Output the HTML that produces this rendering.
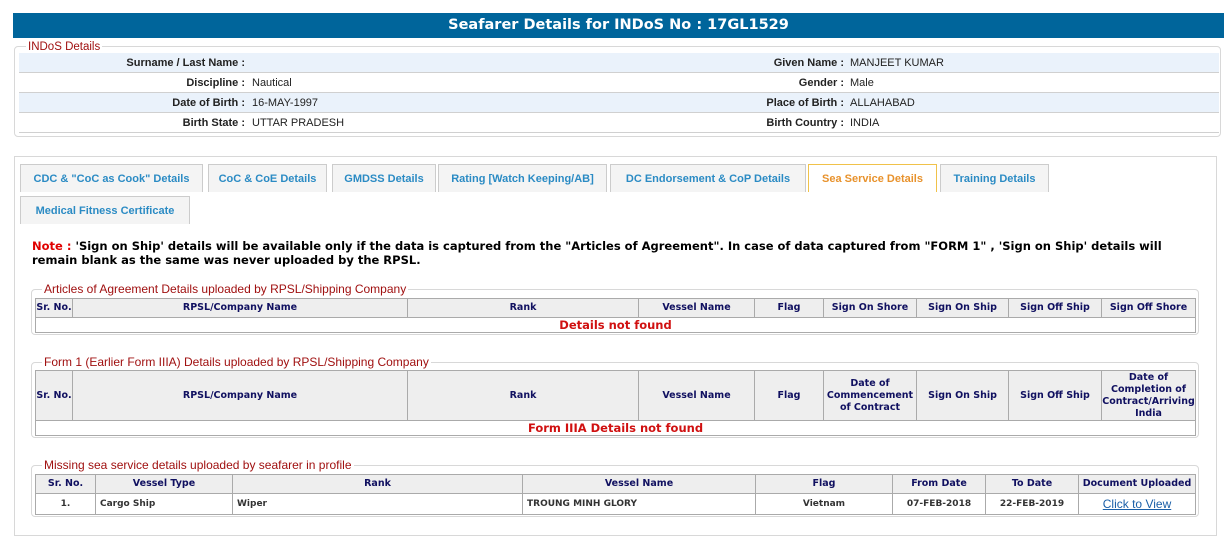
<!DOCTYPE html>
<html><head><meta charset="utf-8"><style>
*{box-sizing:border-box;margin:0;padding:0}
body{width:1226px;height:530px;background:#fff;position:relative;overflow:hidden;font-family:"Liberation Sans",Arial,sans-serif}
.abs{position:absolute}
.hdr{left:13px;top:13px;width:1211px;height:25px;background:#00659b;color:#fff;font:bold 14.5px "DejaVu Sans",Verdana,sans-serif;text-align:center;line-height:25px}
.fs{position:absolute;border:1px solid #d8d8d8;border-radius:4px}
.lg{position:absolute;background:#fff;color:#a01010;font-size:11px;padding:0 2px;line-height:12px}
.lg2{font-size:12px}
.row{position:absolute;left:19px;width:1200px;height:20px;border-bottom:1px solid #d0d0d0;font-size:11px;color:#222;line-height:20px}
.row.b{background:#eaf2fb}
.row span{position:absolute}
.l{font-weight:bold;text-align:right;width:240px}
.tab{position:absolute;height:28px;background:#f4f4f4;border:1px solid #ccc;border-bottom:none;color:#2b8bc4;font-size:11px;font-weight:bold;line-height:28px;text-align:center;white-space:nowrap}
.tab.act{background:#fff;border-color:#f0c24a;color:#e8922c}
.note{left:32px;top:239px;font:bold 11.5px "DejaVu Sans",Verdana,sans-serif;color:#000;line-height:14px;width:1170px}
table{position:absolute;border-collapse:collapse;table-layout:fixed;font-family:"DejaVu Sans",Verdana,sans-serif;border:1px solid #999}
th{background:#eee;color:#101060;font-size:9.5px;border:1px solid #aaa;font-weight:bold;line-height:12px}
td{border:1px solid #aaa;font-size:9px;color:#333;font-weight:bold}
.nf{color:#d01010;font-size:11.5px;text-align:center}
</style></head><body>
<div class="abs hdr">Seafarer Details for INDoS No : 17GL1529</div>

<div class="fs" style="left:14px;top:46px;width:1207px;height:91px"></div>
<div class="lg" style="left:26px;top:41px;font-size:11.5px">INDoS Details</div>
<div class="row b" style="top:53px"><span class="l" style="left:-14px">Surname / Last Name :</span><span class="l" style="left:585px">Given Name :</span><span style="left:831px">MANJEET KUMAR</span></div>
<div class="row" style="top:73px"><span class="l" style="left:-14px">Discipline :</span><span style="left:233px">Nautical</span><span class="l" style="left:585px">Gender :</span><span style="left:831px">Male</span></div>
<div class="row b" style="top:93px"><span class="l" style="left:-14px">Date of Birth :</span><span style="left:233px">16-MAY-1997</span><span class="l" style="left:585px">Place of Birth :</span><span style="left:831px">ALLAHABAD</span></div>
<div class="row" style="top:113px"><span class="l" style="left:-14px">Birth State :</span><span style="left:233px">UTTAR PRADESH</span><span class="l" style="left:585px">Birth Country :</span><span style="left:831px">INDIA</span></div>

<div class="fs" style="left:14px;top:156px;width:1203px;height:380px;border-radius:0"></div>
<div class="tab" style="left:20px;top:164px;width:183px">CDC &amp; "CoC as Cook" Details</div>
<div class="tab" style="left:208px;top:164px;width:119px">CoC &amp; CoE Details</div>
<div class="tab" style="left:332px;top:164px;width:104px">GMDSS Details</div>
<div class="tab" style="left:438px;top:164px;width:169px">Rating [Watch Keeping/AB]</div>
<div class="tab" style="left:610px;top:164px;width:196px">DC Endorsement &amp; CoP Details</div>
<div class="tab act" style="left:808px;top:164px;width:129px">Sea Service Details</div>
<div class="tab" style="left:940px;top:164px;width:109px">Training Details</div>
<div class="tab" style="left:20px;top:196px;width:170px">Medical Fitness Certificate</div>

<div class="abs note"><span style="color:#e00000">Note :</span> 'Sign on Ship' details will be available only if the data is captured from the "Articles of Agreement". In case of data captured from "FORM 1" , 'Sign on Ship' details will remain blank as the same was never uploaded by the RPSL.</div>

<div class="fs" style="left:31px;top:289px;width:1168px;height:46px"></div>
<div class="lg lg2" style="left:42px;top:283px">Articles of Agreement Details uploaded by RPSL/Shipping Company</div>
<table style="left:35px;top:298px;width:1161px">
<colgroup><col style="width:37px"><col style="width:335px"><col style="width:231px"><col style="width:116px"><col style="width:69px"><col style="width:93px"><col style="width:92px"><col style="width:93px"><col></colgroup>
<tr style="height:19px"><th>Sr. No.</th><th>RPSL/Company Name</th><th>Rank</th><th>Vessel Name</th><th>Flag</th><th>Sign On Shore</th><th>Sign On Ship</th><th>Sign Off Ship</th><th>Sign Off Shore</th></tr>
<tr style="height:15px"><td colspan="9" class="nf">Details not found</td></tr>
</table>

<div class="fs" style="left:31px;top:362px;width:1168px;height:76px"></div>
<div class="lg lg2" style="left:42px;top:356px">Form 1 (Earlier Form IIIA) Details uploaded by RPSL/Shipping Company</div>
<table style="left:35px;top:370px;width:1161px">
<colgroup><col style="width:37px"><col style="width:335px"><col style="width:231px"><col style="width:116px"><col style="width:69px"><col style="width:93px"><col style="width:92px"><col style="width:93px"><col></colgroup>
<tr style="height:50px"><th>Sr. No.</th><th>RPSL/Company Name</th><th>Rank</th><th>Vessel Name</th><th>Flag</th><th>Date of Commencement of Contract</th><th>Sign On Ship</th><th>Sign Off Ship</th><th>Date of Completion of Contract/Arriving India</th></tr>
<tr style="height:15px"><td colspan="9" class="nf">Form IIIA Details not found</td></tr>
</table>

<div class="fs" style="left:31px;top:465px;width:1168px;height:52px"></div>
<div class="lg lg2" style="left:42px;top:459px">Missing sea service details uploaded by seafarer in profile</div>
<table style="left:35px;top:474px;width:1161px">
<colgroup><col style="width:60px"><col style="width:137px"><col style="width:290px"><col style="width:233px"><col style="width:137px"><col style="width:93px"><col style="width:93px"><col></colgroup>
<tr style="height:19px"><th>Sr. No.</th><th>Vessel Type</th><th>Rank</th><th>Vessel Name</th><th>Flag</th><th>From Date</th><th>To Date</th><th>Document Uploaded</th></tr>
<tr style="height:21px"><td style="text-align:center">1.</td><td style="padding-left:4px">Cargo Ship</td><td style="padding-left:4px">Wiper</td><td style="padding-left:4px">TROUNG MINH GLORY</td><td style="text-align:center">Vietnam</td><td style="text-align:center">07-FEB-2018</td><td style="text-align:center">22-FEB-2019</td><td style="text-align:center;font:12px 'Liberation Sans',Arial,sans-serif;color:#1a5fa8;text-decoration:underline">Click to View</td></tr>
</table>
</body></html>
